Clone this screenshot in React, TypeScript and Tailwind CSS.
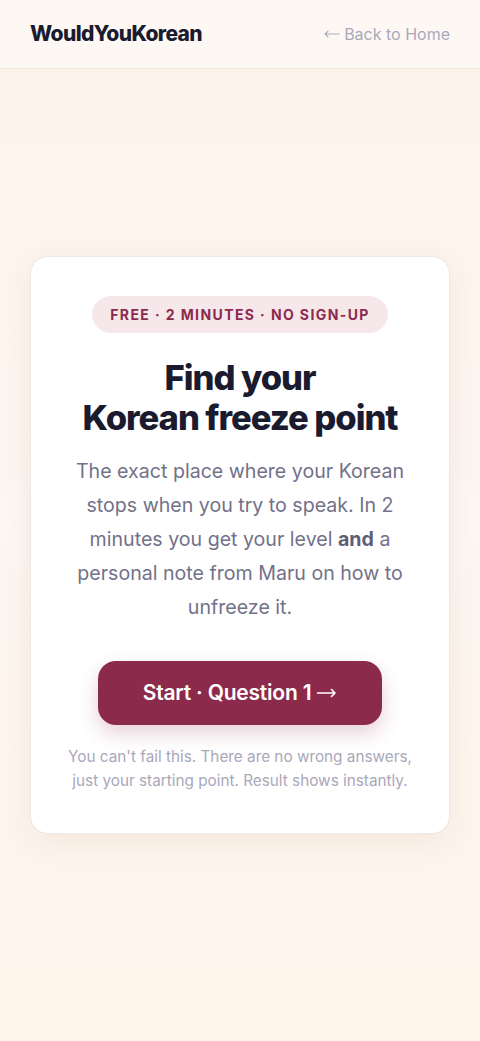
function LongArrow({ left, className }: { left?: boolean; className?: string }) {
  return (
    <svg viewBox="0 0 20 10" fill="none" stroke="currentColor" strokeLinecap="round" strokeLinejoin="round" className={className}>
      {left ? <path d="M19 5H1.5M5 1.5 1.5 5 5 8.5" /> : <path d="M1 5h17.5M15 1.5 18.5 5 15 8.5" />}
    </svg>
  )
}

export default function App() {
  return (
    <div
      className="min-h-screen bg-gradient-to-b from-[#fdf3ea] via-[#fdf6f1] to-[#fdf4ea] text-[#1b1b2f]"
      style={{ fontFamily: 'Inter, "Noto Sans", sans-serif' }}
    >
      {/* Header */}
      <header className="flex h-[69px] items-center justify-between border-b border-[#f1e9e1] bg-[#fdf8f3] px-[30px]">
        <span className="text-[21px] font-extrabold tracking-[-0.03em] text-[#1b1b2f]">WouldYouKorean</span>
        <a className="flex items-center gap-[4px] text-[16px] text-[#a9a8bc]">
          <LongArrow left className="h-[8px] w-[16px] stroke-[1.4]" />
          Back to Home
        </a>
      </header>

      {/* Card */}
      <main className="flex justify-center px-[30px] pt-[187px] pb-16">
        <div className="flex w-full flex-col items-center rounded-[18px] border border-[#ece8e6] bg-white px-[36px] pt-[39px] pb-[40px] text-center shadow-[0_8px_30px_rgba(120,80,40,0.08)]">
          <span className="rounded-full bg-[#f6e7eb] px-[18px] py-[8px] text-[14px] font-bold tracking-[0.1em] text-[#8c2a4c]">
            FREE · 2 MINUTES · NO SIGN-UP
          </span>

          <h1 className="mt-[24px] text-[34.6px] leading-[40px] font-extrabold tracking-[-0.03em] text-[#1b1b2f]">
            Find your
            <br />
            Korean freeze point
          </h1>

          <p className="mt-[17px] px-[4px] text-[19.6px] leading-[34px] text-[#727189]">
            The exact place where your Korean stops when you try to speak. In 2 minutes you get your level{' '}
            <strong className="font-bold text-[#5f5e76]">and</strong> a personal note from Maru on how to unfreeze it.
          </p>

          <button className="mt-[37px] flex h-[64px] w-[284px] items-center justify-center gap-[5px] rounded-[18px] bg-[#8c2a4c] text-[21px] font-semibold tracking-[-0.01em] text-white shadow-[0_8px_20px_rgba(140,42,76,0.22)]">
            Start · Question 1
            <LongArrow className="h-[10px] w-[21px] stroke-[1.6]" />
          </button>

          <p className="mt-[20px] text-[15.3px] leading-[24px] text-[#a8a7ba]">
            You can't fail this. There are no wrong answers, just your starting point. Result shows instantly.
          </p>
        </div>
      </main>
    </div>
  )
}
